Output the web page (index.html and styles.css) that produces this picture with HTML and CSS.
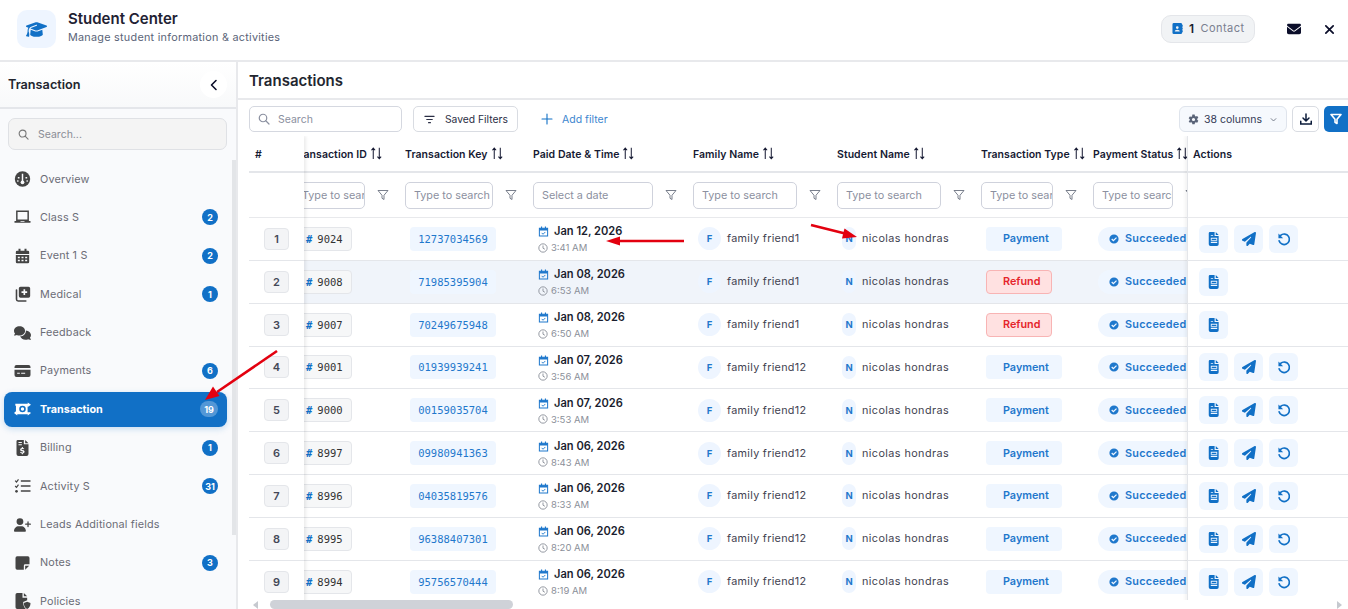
FILE: index.html
```html
<!DOCTYPE html>
<html lang="en">
<head>
<meta charset="utf-8">
<title>Student Center</title>
<link rel="stylesheet" href="styles.css">
</head>
<body>
<svg class="defs" width="0" height="0">
  <symbol id="i-cap" viewBox="0 0 640 512"><path fill="currentColor" d="M320 32c-8.100 0-16.100 1.400-23.700 4.100L15.800 137.400C6.300 140.900 0 149.900 0 160s6.300 19.100 15.800 22.600l57.900 20.900C57.300 229.300 48 259.800 48 291.900v28.100c0 28.400-10.800 57.700-22.300 80.800c-6.500 13-13.900 25.800-22.500 37.600C0 442.700-.9 448.300 .9 453.400s6 8.900 11.200 10.200l64 16c4.200 1.100 8.700 .3 12.400-2s6.300-6.100 7.100-10.400c8.600-42.800 4.300-81.200-2.100-108.700C90.300 344.300 86 329.800 80 316.500V291.900c0-30.200 10.200-58.700 27.900-81.500c12.900-15.500 29.600-28 49.200-35.700l157-61.700c8.200-3.200 17.500 .8 20.700 9s-.8 17.500-9 20.700l-157 61.700c-12.400 4.900-23.300 12.400-32.200 21.600l159.600 57.600c7.600 2.700 15.600 4.100 23.700 4.100s16.100-1.400 23.700-4.100L624.200 182.600c9.500-3.400 15.800-12.500 15.800-22.600s-6.300-19.100-15.800-22.600L343.700 36.100C336.100 33.400 328.100 32 320 32zM128 408c0 35.300 86 72 192 72s192-36.700 192-72L496.700 262.600 354.500 314c-11.100 4-22.800 6-34.500 6s-23.500-2-34.500-6L143.300 262.600 128 408z"/></symbol>
  <symbol id="i-mail" viewBox="0 0 512 512"><path fill="currentColor" d="M48 64C21.500 64 0 85.500 0 112c0 15.100 7.100 29.300 19.200 38.400L236.800 313.600c11.400 8.500 27 8.500 38.400 0L492.800 150.400c12.100-9.100 19.200-23.300 19.200-38.400c0-26.500-21.500-48-48-48H48zM0 176V384c0 35.300 28.700 64 64 64H448c35.300 0 64-28.700 64-64V176L294.400 339.200c-22.800 17.100-54 17.100-76.800 0L0 176z"/></symbol>
  <symbol id="i-x" viewBox="0 0 24 24"><path d="M4 4l16 16M20 4L4 20" fill="none" stroke="currentColor" stroke-width="3.800" stroke-linecap="round"/></symbol>
  <symbol id="i-plane" viewBox="0 0 512 512"><path fill="currentColor" d="M498.100 5.600c10.100 7 15.400 19.100 13.500 31.200l-64 416c-1.500 9.700-7.400 18.200-16 23s-18.900 5.400-28 1.600L284 427.700l-68.500 74.100c-8.900 9.700-22.900 12.900-35.200 8.100S160 493.200 160 480V396.400c0-4 1.500-7.800 4.200-10.700L331.800 202.800c5.800-6.300 5.600-16-.4-22s-15.700-6.400-22-.7L106 360.800 17.700 316.600C7.100 311.300 .3 300.700 0 288.900s5.900-22.800 16.100-28.700l448-256c10.700-6.100 23.900-5.500 34 1.400z"/></symbol>
  <symbol id="i-comments" viewBox="0 0 640 512"><path fill="currentColor" d="M208 352c114.900 0 208-78.800 208-176S322.900 0 208 0S0 78.800 0 176c0 38.600 14.700 74.300 39.600 103.400c-3.500 9.400-8.700 17.700-14.200 24.700c-4.800 6.200-9.700 11-13.300 14.300c-1.800 1.600-3.300 2.900-4.300 3.700c-.5 .4-.9 .7-1.100 .8l-.2 .2C1 327.200-1.400 334.400 .8 340.900S9.100 352 16 352c21.800 0 43.800-5.600 62.100-12.500c9.200-3.500 17.800-7.400 25.300-11.400C134.100 343.300 169.800 352 208 352zM448 176c0 112.300-99.100 196.900-216.500 207C255.800 457.700 336.100 512 432 512c38.200 0 73.900-8.700 104.700-23.900c7.500 4 16 7.900 25.200 11.400c18.300 6.900 40.300 12.500 62.100 12.500c6.900 0 13.100-4.500 15.200-11.100c2.100-6.600-.2-13.800-5.800-17.900l-.2-.2c-.2-.2-.6-.4-1.100-.8c-1-.8-2.500-2-4.300-3.700c-3.600-3.300-8.500-8.100-13.300-14.300c-5.500-7-10.700-15.400-14.200-24.700c24.900-29 39.600-64.700 39.600-103.400c0-92.800-84.900-168.900-192.600-175.500c.4 5.100 .6 10.300 .6 15.500z"/></symbol>
  <symbol id="i-userplus" viewBox="0 0 640 512"><path fill="currentColor" d="M96 128a128 128 0 1 1 256 0A128 128 0 1 1 96 128zM0 482.300C0 383.800 79.800 304 178.300 304h91.400C368.200 304 448 383.800 448 482.300c0 16.400-13.300 29.700-29.700 29.700H29.700C13.300 512 0 498.700 0 482.300zM504 312V248H440c-13.300 0-24-10.700-24-24s10.700-24 24-24h64V136c0-13.300 10.700-24 24-24s24 10.700 24 24v64h64c13.300 0 24 10.700 24 24s-10.700 24-24 24H552v64c0 13.300-10.700 24-24 24s-24-10.700-24-24z"/></symbol>
  <symbol id="i-gauge" viewBox="0 0 24 24"><circle cx="12" cy="12" r="11.500" fill="currentColor"/><path d="M12 4v11M5 10h2.500M16.500 10h2.500M4 15h2M18 15h2" stroke="#f9fafc" stroke-width="2.200" fill="none"/><circle cx="12" cy="17" r="2.800" fill="#f9fafc"/></symbol>
  <symbol id="i-laptop" viewBox="0 0 24 24"><path d="M3.500 3.500h17V17h-17z" fill="none" stroke="currentColor" stroke-width="2.200"/><path d="M0 18h8.500l1 1h5l1-1H24v2.500H0z" fill="currentColor"/></symbol>
  <symbol id="i-cal" viewBox="0 0 24 24"><path fill="currentColor" fill-rule="evenodd" d="M6 1h3v3h6V1h3v3h2a2 2 0 0 1 2 2v3H2V6a2 2 0 0 1 2-2h2zM2 10.500h20V21a2 2 0 0 1-2 2H4a2 2 0 0 1-2-2zM5 13v2.500h3V13zm5.500 0v2.500h3V13zm5.500 0v2.500h3V13zM5 17.500V20h3v-2.500zm5.500 0V20h3v-2.500zm5.500 0V20h3v-2.500z"/></symbol>
  <symbol id="i-med" viewBox="0 0 24 24"><path fill="currentColor" fill-rule="evenodd" d="M9 1h12a2.500 2.500 0 0 1 2.500 2.500V15a2.500 2.500 0 0 1-2.500 2.500H9A2.500 2.500 0 0 1 6.500 15V3.500A2.500 2.500 0 0 1 9 1zm4.500 4v3h-3v2.500h3v3H16v-3h3V8h-3V5z"/><path d="M3 6v14a2.500 2.500 0 0 0 2.500 2.500H17" fill="none" stroke="currentColor" stroke-width="2.400" stroke-linecap="round"/></symbol>
  <symbol id="i-card" viewBox="0 0 24 24"><path fill="currentColor" fill-rule="evenodd" d="M3 3h18a3 3 0 0 1 3 3v1.500H0V6a3 3 0 0 1 3-3zM0 10h24v8a3 3 0 0 1-3 3H3a3 3 0 0 1-3-3zm4 4.500V16h4v-1.500zm6 0V16h6v-1.500z"/></symbol>
  <symbol id="i-money" viewBox="0 0 26 20"><path fill="currentColor" fill-rule="evenodd" d="M2 2h19V0l5 3.500L21 7V5h-.2v10H24v-.5l2 1.500-5 4v-2H5v2l-5-4 3-2.400V5H2zm11 3a5 5 0 1 0 0 10 5 5 0 0 0 0-10z"/><circle cx="13" cy="10" r="2.600" fill="currentColor"/></symbol>
  <symbol id="i-bill" viewBox="0 0 24 24"><path fill="currentColor" fill-rule="evenodd" d="M5 0h9v6.500h7V21a3 3 0 0 1-3 3H6a3 3 0 0 1-3-3V2a2 2 0 0 1 2-2zm11 0l5 5h-5zM6 3v1.500h5V3zm0 3.500V8h5V6.500zM11 10.500V12c-1.500.3-2.500 1.300-2.500 2.600 0 3 4.500 1.800 4.500 3.300 0 1.100-2.500.8-4-.1l-.5 1.500c.8.400 1.600.7 2.500.8V21.500h1.600V20c1.500-.3 2.500-1.200 2.500-2.500 0-3-4.500-2-4.500-3.300 0-1 2-.9 3.500-.2l.5-1.400c-.6-.3-1.300-.5-2-.6v-1.500z"/></symbol>
  <symbol id="i-list" viewBox="0 0 24 24"><path d="M1 4l2 2 3-4M1 12l2 2 3-4" fill="none" stroke="currentColor" stroke-width="1.800"/><path d="M9.500 4.500H24M9.500 12H24M9.500 19.500H24" stroke="currentColor" stroke-width="2.400"/><circle cx="3" cy="20" r="2" fill="currentColor"/></symbol>
  <symbol id="i-note" viewBox="0 0 24 24"><path fill="currentColor" d="M4 2h16a2.500 2.500 0 0 1 2.500 2.500V14H16a2 2 0 0 0-2 2v6H4a2.500 2.500 0 0 1-2.500-2.500v-15A2.500 2.500 0 0 1 4 2zM22 16l-6 6v-6z"/></symbol>
  <symbol id="i-policy" viewBox="0 0 24 24"><path fill="currentColor" d="M4 0h8v7h7v4l-6 2.500c0 4 1 7.500 4 10.500H4a2.500 2.500 0 0 1-2.500-2.500v-19A2.500 2.500 0 0 1 4 0zm10 0l5 5h-5z"/><path fill="currentColor" d="M19 13l5 2c0 4-1.500 7.500-5 9-3.500-1.500-5-5-5-9z"/></symbol>
  <symbol id="i-contact" viewBox="0 0 24 24"><path fill="currentColor" fill-rule="evenodd" d="M4 0h15a3 3 0 0 1 3 3v18a3 3 0 0 1-3 3H4a3 3 0 0 1-3-3V3a3 3 0 0 1 3-3zm7.500 7a3 3 0 1 0 0 6 3 3 0 0 0 0-6zM6 18.500h11c0-2.500-2-4-5.500-4s-5.500 1.500-5.500 4z"/><path fill="currentColor" d="M22.500 4H24v4h-1.500zM22.500 10H24v4h-1.500zM22.500 16H24v4h-1.500z"/></symbol>
  <symbol id="i-gear" viewBox="0 0 24 24"><path fill="currentColor" fill-rule="evenodd" d="M9.500 1h5l.7 3.200 1.800 1 3.100-1 2.400 4.200-2.400 2.200v2l2.400 2.200-2.400 4.200-3.100-1-1.800 1-.7 3.200h-5l-.7-3.200-1.800-1-3.100 1L1.500 15.800l2.400-2.200v-2L1.500 9.400l2.400-4.200 3.100 1 1.800-1zM12 8.500a3.500 3.500 0 1 0 0 7 3.500 3.500 0 0 0 0-7z"/></symbol>
  <symbol id="i-down" viewBox="0 0 24 24"><path d="M5 9l7 7 7-7" fill="none" stroke="currentColor" stroke-width="2.400"/></symbol>
  <symbol id="i-dl" viewBox="0 0 24 24"><path d="M12 2v13M6 10l6 6 6-6" fill="none" stroke="currentColor" stroke-width="3" stroke-linecap="round" stroke-linejoin="round"/><path d="M1.500 16.500V22h21v-5.500" fill="none" stroke="currentColor" stroke-width="3" stroke-linecap="round"/></symbol>
  <symbol id="i-funnel" viewBox="0 0 24 24"><path d="M2 3h20l-8 9.500V21l-4-2.500v-6z" fill="none" stroke="currentColor" stroke-width="1.800" stroke-linejoin="round"/></symbol>
  <symbol id="i-funnelb" viewBox="0 0 24 24"><path d="M2 3h20l-8 9.500V21l-4-2.500v-6z" fill="none" stroke="currentColor" stroke-width="3.200" stroke-linejoin="round"/></symbol>
  <symbol id="i-sort" viewBox="0 0 14 14"><path d="M3.500 13V1.200M1.500 3.500L3.500 1.200 5.500 3.500M10 .8v11.800M8 10.300L10 12.600 12 10.300" fill="none" stroke="currentColor" stroke-width="1.100"/></symbol>
  <symbol id="i-calcheck" viewBox="0 0 24 24"><path d="M3 5h18v17H3z" fill="none" stroke="currentColor" stroke-width="2.200"/><path d="M3 5h18v5H3zM6.500 1h2.500v4H6.500zM15 1h2.500v4H15z" fill="currentColor"/><path d="M8 15l3 3 5-5" fill="none" stroke="currentColor" stroke-width="2"/></symbol>
  <symbol id="i-clock" viewBox="0 0 24 24"><circle cx="12" cy="12" r="10" fill="none" stroke="currentColor" stroke-width="2.200"/><path d="M12 6v6.500l4.500 2.500" fill="none" stroke="currentColor" stroke-width="2.200"/></symbol>
  <symbol id="i-check" viewBox="0 0 24 24"><path fill="currentColor" fill-rule="evenodd" d="M12 1a11 11 0 1 1 0 22 11 11 0 0 1 0-22zm5 6.500l-6.500 6.500L7.500 11 5.500 13l5 5 8.500-8.500z"/></symbol>
  <symbol id="i-file" viewBox="0 0 24 24"><path fill="currentColor" fill-rule="evenodd" d="M5 0h8v7h7v14a3 3 0 0 1-3 3H6a3 3 0 0 1-3-3V2a2 2 0 0 1 2-2zm10 0l5 5h-5zM6.500 10v5h11v-5zm0 6.500V19h11v-2.500zM8 11.500h8v2H8zM6.500 5.500V7h4V5.500z"/></symbol>
  <symbol id="i-undo" viewBox="0 0 24 24"><path d="M6.200 5.800A9 9 0 1 1 3.600 15" fill="none" stroke="currentColor" stroke-width="2.900" stroke-linecap="round"/><path d="M2.500 2.500v8H10.500z" fill="currentColor"/></symbol>
  <symbol id="i-search" viewBox="0 0 24 24"><circle cx="10" cy="10" r="7.500" fill="none" stroke="currentColor" stroke-width="2.400"/><path d="M15.500 15.500L22 22" stroke="currentColor" stroke-width="2.400" stroke-linecap="round"/></symbol>
  <symbol id="i-lines" viewBox="0 0 24 24"><path d="M2 5h20M6 12h12M10 19h4" stroke="currentColor" stroke-width="2.600" stroke-linecap="round"/></symbol>
  <symbol id="i-plus" viewBox="0 0 24 24"><path d="M12 2v20M2 12h20" stroke="currentColor" stroke-width="2.200" stroke-linecap="round"/></symbol>
  <symbol id="i-chev" viewBox="0 0 24 24"><path d="M16 3l-9 9 9 9" fill="none" stroke="currentColor" stroke-width="3.200" stroke-linecap="round" stroke-linejoin="round"/></symbol>
</svg>

<header class="app-header">
  <div class="brand-tile"><svg class="brand-icon"><use href="#i-cap"/></svg></div>
  <div class="brand-text">
    <div class="brand-title">Student Center</div>
    <div class="brand-sub">Manage student information &amp; activities</div>
  </div>
  <div class="contact-pill"><svg class="contact-icon"><use href="#i-contact"/></svg><b>1</b><span>Contact</span></div>
  <svg class="head-mail"><use href="#i-mail"/></svg>
  <svg class="head-x"><use href="#i-x"/></svg>
</header>

<div class="app-body">
  <aside class="sidebar">
    <div class="side-head">
      <span class="side-title">Transaction</span>
      <span class="side-toggle"><svg><use href="#i-chev"/></svg></span>
    </div>
    <div class="side-search"><svg><use href="#i-search"/></svg><span>Search...</span></div>
    <nav class="nav">
      <div class="nav-item"><svg class="nav-icon"><use href="#i-gauge"/></svg><span class="nav-label">Overview</span></div>
      <div class="nav-item"><svg class="nav-icon"><use href="#i-laptop"/></svg><span class="nav-label">Class S</span><span class="nav-badge">2</span></div>
      <div class="nav-item"><svg class="nav-icon"><use href="#i-cal"/></svg><span class="nav-label">Event 1 S</span><span class="nav-badge">2</span></div>
      <div class="nav-item"><svg class="nav-icon"><use href="#i-med"/></svg><span class="nav-label">Medical</span><span class="nav-badge">1</span></div>
      <div class="nav-item"><svg class="nav-icon"><use href="#i-comments"/></svg><span class="nav-label">Feedback</span></div>
      <div class="nav-item"><svg class="nav-icon"><use href="#i-card"/></svg><span class="nav-label">Payments</span><span class="nav-badge">6</span></div>
      <div class="nav-item active"><svg class="nav-icon"><use href="#i-money"/></svg><span class="nav-label">Transaction</span><span class="nav-badge">19</span></div>
      <div class="nav-item"><svg class="nav-icon"><use href="#i-bill"/></svg><span class="nav-label">Billing</span><span class="nav-badge">1</span></div>
      <div class="nav-item"><svg class="nav-icon"><use href="#i-list"/></svg><span class="nav-label">Activity S</span><span class="nav-badge">31</span></div>
      <div class="nav-item"><svg class="nav-icon"><use href="#i-userplus"/></svg><span class="nav-label">Leads Additional fields</span></div>
      <div class="nav-item"><svg class="nav-icon"><use href="#i-note"/></svg><span class="nav-label">Notes</span><span class="nav-badge">3</span></div>
      <div class="nav-item"><svg class="nav-icon"><use href="#i-policy"/></svg><span class="nav-label">Policies</span></div>
    </nav>
    <div class="side-scrollbar"></div>
  </aside>

  <main class="main">
    <h1 class="main-title">Transactions</h1>
    <div class="toolbar">
      <div class="tb-search"><svg><use href="#i-search"/></svg><span>Search</span></div>
      <div class="tb-saved"><svg><use href="#i-lines"/></svg><span>Saved Filters</span></div>
      <div class="tb-add"><svg><use href="#i-plus"/></svg><span>Add filter</span></div>
      <div class="tb-columns"><svg class="tb-gear"><use href="#i-gear"/></svg><span>38 columns</span><svg class="tb-caret"><use href="#i-down"/></svg></div>
      <div class="tb-dl"><svg><use href="#i-dl"/></svg></div>
      <div class="tb-filter"><svg><use href="#i-funnelb"/></svg></div>
    </div>

    <div class="grid">
      <div class="pane pane-index">
        <div class="row-head cell-index-head">#</div>
        <div class="row-filter"></div>
        <div class="row"><span class="idx">1</span></div>
        <div class="row"><span class="idx">2</span></div>
        <div class="row"><span class="idx">3</span></div>
        <div class="row"><span class="idx">4</span></div>
        <div class="row"><span class="idx">5</span></div>
        <div class="row"><span class="idx">6</span></div>
        <div class="row"><span class="idx">7</span></div>
        <div class="row"><span class="idx">8</span></div>
        <div class="row"><span class="idx">9</span></div>
      </div>

      <div class="pane pane-scroll">
        <div class="scroll-inner">
          <div class="row-head">
            <div class="h c-id">Transaction ID <svg class="sort"><use href="#i-sort"/></svg></div>
            <div class="h c-key">Transaction Key <svg class="sort"><use href="#i-sort"/></svg></div>
            <div class="h c-date">Paid Date &amp; Time <svg class="sort"><use href="#i-sort"/></svg></div>
            <div class="h c-fam">Family Name <svg class="sort"><use href="#i-sort"/></svg></div>
            <div class="h c-stu">Student Name <svg class="sort"><use href="#i-sort"/></svg></div>
            <div class="h c-type">Transaction Type <svg class="sort"><use href="#i-sort"/></svg></div>
            <div class="h c-stat">Payment Status <svg class="sort"><use href="#i-sort"/></svg></div>
          </div>
          <div class="row-filter">
            <div class="f c-id"><span class="inp">Type to search</span><svg class="fun"><use href="#i-funnel"/></svg></div>
            <div class="f c-key"><span class="inp">Type to search</span><svg class="fun"><use href="#i-funnel"/></svg></div>
            <div class="f c-date"><span class="inp">Select a date</span><svg class="fun"><use href="#i-funnel"/></svg></div>
            <div class="f c-fam"><span class="inp">Type to search</span><svg class="fun"><use href="#i-funnel"/></svg></div>
            <div class="f c-stu"><span class="inp">Type to search</span><svg class="fun"><use href="#i-funnel"/></svg></div>
            <div class="f c-type"><span class="inp">Type to search</span><svg class="fun"><use href="#i-funnel"/></svg></div>
            <div class="f c-stat"><span class="inp">Type to search</span><svg class="fun"><use href="#i-funnel"/></svg></div>
          </div>

          <div class="row">
            <div class="d c-id"><span class="chip-id"><i>#</i>9024</span></div>
            <div class="d c-key"><span class="chip-key">12737034569</span></div>
            <div class="d c-date"><div class="date"><svg><use href="#i-calcheck"/></svg>Jan 12, 2026</div><div class="time"><svg><use href="#i-clock"/></svg>3:41 AM</div></div>
            <div class="d c-fam"><span class="av">F</span>family friend1</div>
            <div class="d c-stu"><span class="av av-n">N</span>nicolas hondras</div>
            <div class="d c-type"><span class="chip-type">Payment</span></div>
            <div class="d c-stat"><span class="chip-stat"><svg><use href="#i-check"/></svg>Succeeded</span></div>
          </div>
          <div class="row hl">
            <div class="d c-id"><span class="chip-id"><i>#</i>9008</span></div>
            <div class="d c-key"><span class="chip-key">71985395904</span></div>
            <div class="d c-date"><div class="date"><svg><use href="#i-calcheck"/></svg>Jan 08, 2026</div><div class="time"><svg><use href="#i-clock"/></svg>6:53 AM</div></div>
            <div class="d c-fam"><span class="av">F</span>family friend1</div>
            <div class="d c-stu"><span class="av av-n">N</span>nicolas hondras</div>
            <div class="d c-type"><span class="chip-type refund">Refund</span></div>
            <div class="d c-stat"><span class="chip-stat"><svg><use href="#i-check"/></svg>Succeeded</span></div>
          </div>
          <div class="row">
            <div class="d c-id"><span class="chip-id"><i>#</i>9007</span></div>
            <div class="d c-key"><span class="chip-key">70249675948</span></div>
            <div class="d c-date"><div class="date"><svg><use href="#i-calcheck"/></svg>Jan 08, 2026</div><div class="time"><svg><use href="#i-clock"/></svg>6:50 AM</div></div>
            <div class="d c-fam"><span class="av">F</span>family friend1</div>
            <div class="d c-stu"><span class="av av-n">N</span>nicolas hondras</div>
            <div class="d c-type"><span class="chip-type refund">Refund</span></div>
            <div class="d c-stat"><span class="chip-stat"><svg><use href="#i-check"/></svg>Succeeded</span></div>
          </div>
          <div class="row">
            <div class="d c-id"><span class="chip-id"><i>#</i>9001</span></div>
            <div class="d c-key"><span class="chip-key">01939939241</span></div>
            <div class="d c-date"><div class="date"><svg><use href="#i-calcheck"/></svg>Jan 07, 2026</div><div class="time"><svg><use href="#i-clock"/></svg>3:56 AM</div></div>
            <div class="d c-fam"><span class="av">F</span>family friend12</div>
            <div class="d c-stu"><span class="av av-n">N</span>nicolas hondras</div>
            <div class="d c-type"><span class="chip-type">Payment</span></div>
            <div class="d c-stat"><span class="chip-stat"><svg><use href="#i-check"/></svg>Succeeded</span></div>
          </div>
          <div class="row">
            <div class="d c-id"><span class="chip-id"><i>#</i>9000</span></div>
            <div class="d c-key"><span class="chip-key">00159035704</span></div>
            <div class="d c-date"><div class="date"><svg><use href="#i-calcheck"/></svg>Jan 07, 2026</div><div class="time"><svg><use href="#i-clock"/></svg>3:53 AM</div></div>
            <div class="d c-fam"><span class="av">F</span>family friend12</div>
            <div class="d c-stu"><span class="av av-n">N</span>nicolas hondras</div>
            <div class="d c-type"><span class="chip-type">Payment</span></div>
            <div class="d c-stat"><span class="chip-stat"><svg><use href="#i-check"/></svg>Succeeded</span></div>
          </div>
          <div class="row">
            <div class="d c-id"><span class="chip-id"><i>#</i>8997</span></div>
            <div class="d c-key"><span class="chip-key">09980941363</span></div>
            <div class="d c-date"><div class="date"><svg><use href="#i-calcheck"/></svg>Jan 06, 2026</div><div class="time"><svg><use href="#i-clock"/></svg>8:43 AM</div></div>
            <div class="d c-fam"><span class="av">F</span>family friend12</div>
            <div class="d c-stu"><span class="av av-n">N</span>nicolas hondras</div>
            <div class="d c-type"><span class="chip-type">Payment</span></div>
            <div class="d c-stat"><span class="chip-stat"><svg><use href="#i-check"/></svg>Succeeded</span></div>
          </div>
          <div class="row">
            <div class="d c-id"><span class="chip-id"><i>#</i>8996</span></div>
            <div class="d c-key"><span class="chip-key">04035819576</span></div>
            <div class="d c-date"><div class="date"><svg><use href="#i-calcheck"/></svg>Jan 06, 2026</div><div class="time"><svg><use href="#i-clock"/></svg>8:33 AM</div></div>
            <div class="d c-fam"><span class="av">F</span>family friend12</div>
            <div class="d c-stu"><span class="av av-n">N</span>nicolas hondras</div>
            <div class="d c-type"><span class="chip-type">Payment</span></div>
            <div class="d c-stat"><span class="chip-stat"><svg><use href="#i-check"/></svg>Succeeded</span></div>
          </div>
          <div class="row">
            <div class="d c-id"><span class="chip-id"><i>#</i>8995</span></div>
            <div class="d c-key"><span class="chip-key">96388407301</span></div>
            <div class="d c-date"><div class="date"><svg><use href="#i-calcheck"/></svg>Jan 06, 2026</div><div class="time"><svg><use href="#i-clock"/></svg>8:20 AM</div></div>
            <div class="d c-fam"><span class="av">F</span>family friend12</div>
            <div class="d c-stu"><span class="av av-n">N</span>nicolas hondras</div>
            <div class="d c-type"><span class="chip-type">Payment</span></div>
            <div class="d c-stat"><span class="chip-stat"><svg><use href="#i-check"/></svg>Succeeded</span></div>
          </div>
          <div class="row">
            <div class="d c-id"><span class="chip-id"><i>#</i>8994</span></div>
            <div class="d c-key"><span class="chip-key">95756570444</span></div>
            <div class="d c-date"><div class="date"><svg><use href="#i-calcheck"/></svg>Jan 06, 2026</div><div class="time"><svg><use href="#i-clock"/></svg>8:19 AM</div></div>
            <div class="d c-fam"><span class="av">F</span>family friend12</div>
            <div class="d c-stu"><span class="av av-n">N</span>nicolas hondras</div>
            <div class="d c-type"><span class="chip-type">Payment</span></div>
            <div class="d c-stat"><span class="chip-stat"><svg><use href="#i-check"/></svg>Succeeded</span></div>
          </div>
        </div>
      </div>

      <div class="pane pane-actions">
        <div class="row-head actions-head">Actions</div>
        <div class="row-filter"></div>
        <div class="row acts"><span class="act"><svg><use href="#i-file"/></svg></span><span class="act"><svg><use href="#i-plane"/></svg></span><span class="act"><svg><use href="#i-undo"/></svg></span></div>
        <div class="row acts"><span class="act"><svg><use href="#i-file"/></svg></span></div>
        <div class="row acts"><span class="act"><svg><use href="#i-file"/></svg></span></div>
        <div class="row acts"><span class="act"><svg><use href="#i-file"/></svg></span><span class="act"><svg><use href="#i-plane"/></svg></span><span class="act"><svg><use href="#i-undo"/></svg></span></div>
        <div class="row acts"><span class="act"><svg><use href="#i-file"/></svg></span><span class="act"><svg><use href="#i-plane"/></svg></span><span class="act"><svg><use href="#i-undo"/></svg></span></div>
        <div class="row acts"><span class="act"><svg><use href="#i-file"/></svg></span><span class="act"><svg><use href="#i-plane"/></svg></span><span class="act"><svg><use href="#i-undo"/></svg></span></div>
        <div class="row acts"><span class="act"><svg><use href="#i-file"/></svg></span><span class="act"><svg><use href="#i-plane"/></svg></span><span class="act"><svg><use href="#i-undo"/></svg></span></div>
        <div class="row acts"><span class="act"><svg><use href="#i-file"/></svg></span><span class="act"><svg><use href="#i-plane"/></svg></span><span class="act"><svg><use href="#i-undo"/></svg></span></div>
        <div class="row acts"><span class="act"><svg><use href="#i-file"/></svg></span><span class="act"><svg><use href="#i-plane"/></svg></span><span class="act"><svg><use href="#i-undo"/></svg></span></div>
      </div>

      <div class="hscroll"><span class="hs-left"></span><span class="hs-thumb"></span><span class="hs-right"></span></div>
    </div>
  </main>
</div>

<svg class="arrows" viewBox="0 0 1348 609">
  <path d="M684 241H618" stroke="#e3000f" stroke-width="2.600"/>
  <path d="M606 241l14-4.500v9z" fill="#e3000f"/>
  <path d="M811 225l34 8.500" stroke="#e3000f" stroke-width="2.600"/>
  <path d="M857 237l-15 1.500 2.500-10z" fill="#e3000f"/>
  <path d="M277 351L217 392" stroke="#e3000f" stroke-width="2.600"/>
  <path d="M205 400l8-13.500 6.500 9.500z" fill="#e3000f"/>
</svg>
</body>
</html>
```
FILE: styles.css
```css
* { box-sizing: border-box; }
html, body { margin: 0; height: 609px; overflow: hidden; }
body { width: 1348px; position: relative; font-family: Inter, "Noto Sans", "Liberation Sans", sans-serif; font-size: 11px; color: #1a1d2e; background: #fff; }
.defs { position: absolute; }
svg { display: block; flex: none; }

.app-header { height: 62px; display: flex; align-items: center; padding-left: 17px; border-bottom: 2px solid #e8e9ec; padding-bottom: 2px; }
.brand-tile { width: 39px; height: 38px; border-radius: 10px; background: #eef5ff; display: flex; align-items: center; justify-content: center; margin-right: 12px; }
.brand-icon { width: 21px; height: 17px; color: #1170c6; }
.brand-text { flex: 1; padding-bottom: 2px; }
.brand-title { font-size: 15px; font-weight: 600; color: #1f2233; line-height: 20px; margin-top: -1px; }
.brand-sub { font-size: 10.800px; color: #5a6478; line-height: 16px; margin-top: 1px; letter-spacing: .27px; }
.contact-pill { width: 94px; height: 28px; border-radius: 10px; background: #f1f3f5; border: 1px solid #e4e6ea; display: flex; align-items: center; padding: 0 0 2px 10px; color: #7a8090; margin-right: 32px; font-size: 11px; letter-spacing: .45px; }
.contact-icon { width: 11px; height: 11px; color: #1170c6; margin-right: 6px; }
.contact-pill b { color: #1a1d2e; font-weight: 600; margin-right: 6px; font-size: 12px; }
.head-mail { width: 14px; height: 14px; color: #0b0e2a; margin-right: 23px; }
.head-x { width: 11px; height: 11px; color: #0b0e2a; margin-right: 13px; }

.app-body { display: flex; height: 547px; }
.sidebar { width: 238px; flex: none; border-right: 2px solid #e8e9ec; background: #f9fafc; position: relative; overflow: hidden; }
.side-head { height: 47px; display: flex; align-items: center; justify-content: space-between; padding: 0 9px 0 8px; border-bottom: 2px solid #e4e6ea; background: linear-gradient(#fff, #f8f9fa); }
.side-title { font-size: 12.700px; font-weight: 600; color: #23262f; }
.side-toggle { width: 27px; height: 27px; border-radius: 50%; background: #fff; display: flex; align-items: center; justify-content: center; color: #0b0e2a; }
.side-toggle svg { width: 12px; height: 12px; }
.side-search { margin: 9px 9px 0 8px; height: 32px; border: 1px solid #dfe1e5; border-radius: 7px; background: #f4f4f4; display: flex; align-items: center; padding-left: 9px; color: #8a8d96; font-size: 10.500px; }
.side-search svg { width: 11px; height: 11px; margin-right: 9px; color: #777; }
.nav { padding: 11.500px 9px 0 4px; }
.nav-item { height: 35px; margin-bottom: 3.400px; display: flex; align-items: center; padding: 0 9px 0 9.500px; color: #6b6c76; font-size: 10.800px; letter-spacing: .17px; border-radius: 8px; }
.nav-icon { width: 17px; height: 16px; color: #444; margin-right: 9.500px; }
.nav-label { flex: 1; }
.nav-badge { min-width: 16px; height: 16px; padding: 0 3px; border-radius: 8px; background: #1170c6; color: #fff; font-size: 9px; font-weight: 700; letter-spacing: 0; display: flex; align-items: center; justify-content: center; }
.nav-item.active { background: #1170c6; color: #fff; font-weight: 700; letter-spacing: 0; box-shadow: 0 2px 6px rgba(17,112,198,.22); }
.nav-item.active .nav-icon { color: #fff; }
.nav-item.active .nav-badge { background: rgba(255,255,255,.28); min-width: 18px; }
.side-scrollbar { position: absolute; right: 0; top: 98px; width: 4px; height: 375px; background: #e3e5e8; }

.main { flex: 1; min-width: 0; position: relative; }
.main-title { margin: 0; height: 38px; padding: 0 0 0 11px; font-size: 15px; font-weight: 600; color: #23262f; display: flex; align-items: center; border-bottom: 2px solid #e8e9ec; }
.toolbar { display: flex; align-items: center; height: 26px; margin-top: 6px; padding-left: 11px; font-size: 10.500px; }
.tb-search { width: 153px; height: 26px; border: 1px solid #d5d8e0; border-radius: 5px; display: flex; align-items: center; padding-left: 8px; color: #8b90a0; }
.tb-search svg { width: 12px; height: 12px; margin-right: 8px; color: #8b90a0; }
.tb-saved { width: 105px; height: 26px; margin-left: 11px; border: 1px solid #d9dce2; border-radius: 5px; display: flex; align-items: center; padding-left: 9px; color: #2b2f45; font-size: 10.300px; }
.tb-saved svg { width: 13px; height: 11px; margin-right: 9px; color: #2b2f45; }
.tb-add { display: flex; align-items: center; color: #3d86cf; margin-left: 23px; flex: 1; }
.tb-add svg { width: 12px; height: 12px; margin-right: 9px; color: #1170c6; }
.tb-columns { width: 108px; height: 26px; border: 1px solid #dfe4ec; border-radius: 6px; background: #f6f9fd; display: flex; align-items: center; padding-left: 8px; color: #333a55; }
.tb-gear { width: 11px; height: 11px; color: #5a6478; margin-right: 5px; }
.tb-caret { width: 9px; height: 9px; color: #6b7280; margin-left: 7px; }
.tb-dl { width: 27px; height: 26px; margin-left: 5px; border: 1px solid #d9dce2; border-radius: 5px; display: flex; align-items: center; justify-content: center; color: #0b1b3a; }
.tb-dl svg { width: 12px; height: 12px; }
.tb-filter { width: 24px; height: 26px; margin-left: 5px; background: #1170c6; border-radius: 5px 0 0 5px; display: flex; align-items: center; padding-left: 6px; color: #fff; }
.tb-filter svg { width: 12px; height: 12px; }

.grid { position: relative; display: flex; margin: 4px 0 0 11px; height: 473px; overflow: hidden; }
.pane { flex: none; background: #fff; }
.pane-index { width: 55px; position: relative; z-index: 2; box-shadow: 2px 0 3px rgba(0,0,0,.08); }
.pane-scroll { width: 883px; overflow: hidden; }
.scroll-inner { margin-left: -23px; width: 1000px; }
.pane-actions { width: 161px; position: relative; z-index: 2; border-left: 1px solid #e4e6ea; box-shadow: -2px 0 3px rgba(0,0,0,.05); }

.row-head { height: 37px; padding-top: 2px; border-bottom: 2px solid #e4e6ea; display: flex; align-items: center; font-weight: 600; font-size: 10.500px; letter-spacing: .05px; color: #161a33; }
.row-filter { height: 45px; border-bottom: 1px solid #e8e9ec; display: flex; align-items: center; }
.row { height: 42.850px; border-bottom: 1px solid #e4e6ea; display: flex; align-items: center; }
.row.hl { background: #f0f4fa; }
.pane-index .row { justify-content: center; padding-left: 0; }
.cell-index-head { padding-left: 6px; }
.actions-head { padding-left: 5px; }

.c-id, .c-type { width: 112px; }
.c-key { width: 128px; }
.c-date { width: 160px; }
.c-fam, .c-stu { width: 144px; }
.c-stat { width: 120px; }
.h { padding-left: 12px; white-space: nowrap; display: flex; align-items: center; flex: none; }
.sort { width: 13px; height: 13px; margin: -2px 0 0 3px; color: #161a33; }
.f { padding-left: 12px; display: flex; align-items: center; flex: none; }
.inp { display: block; height: 27px; line-height: 25px; border: 1px solid #cfd2dc; border-radius: 5px; padding: 0 7px 0 8px; color: #8b90a0; font-size: 10.800px; overflow: hidden; white-space: nowrap; margin-right: 12px; background: #fff; flex: none; }
.c-id .inp, .c-type .inp { width: 72px; }
.c-key .inp { width: 88px; }
.c-date .inp { width: 120px; }
.c-fam .inp, .c-stu .inp { width: 104px; }
.c-stat .inp { width: 80px; }
.fun { width: 12px; height: 12px; color: #6b7280; }

.d { padding-left: 17px; flex: none; display: flex; align-items: center; font-size: 10.800px; letter-spacing: .3px; color: #3f4250; white-space: nowrap; }
.d.c-stu { letter-spacing: .42px; }
.idx { width: 25px; height: 22px; border: 1px solid #e4e6ea; border-radius: 4px; background: #f3f4f6; display: flex; align-items: center; justify-content: center; font-weight: 600; color: #444857; }
.chip-id { width: 54px; height: 24px; border: 1px solid #e4e6ea; border-radius: 4px; background: #f6f7f8; font-family: "DejaVu Sans Mono", monospace; font-size: 10.500px; letter-spacing: 0; color: #333; display: flex; align-items: center; padding-left: 7px; font-weight: 400; }
.chip-id i { font-style: normal; color: #1170c6; font-weight: 700; margin-right: 5px; }
.chip-key { width: 86px; height: 24px; border-radius: 4px; background: #eff6ff; font-family: "DejaVu Sans Mono", monospace; font-size: 10.500px; letter-spacing: 0; color: #1f78cc; display: flex; align-items: center; justify-content: center; }
.d.c-date { flex-direction: column; align-items: flex-start; justify-content: center; padding-top: 1px; letter-spacing: 0; }
.date { display: flex; align-items: center; font-weight: 600; font-size: 11.100px; color: #1a1d2e; line-height: 15px; }
.date svg { width: 11px; height: 11px; margin-right: 5px; color: #1f78cc; }
.time { display: flex; align-items: center; font-size: 9.500px; color: #8b8f99; line-height: 13px; margin-top: 2px; }
.time svg { width: 10px; height: 10px; margin-right: 3px; }
.av { width: 23px; height: 23px; border-radius: 50%; background: #eef5ff; color: #1f78cc; font-weight: 700; font-size: 9.500px; letter-spacing: 0; display: flex; align-items: center; justify-content: center; margin: 0 6px 0 0; }
.av-n { width: 14px; border-radius: 7px; margin-right: 6px; }
.chip-type { width: 76px; height: 24px; border-radius: 4px; background: #eff6ff; color: #1f78cc; font-weight: 600; letter-spacing: 0; display: flex; align-items: center; padding-left: 17px; }
.chip-type.refund { width: 66px; background: #ffe1e1; border: 1px solid #f8b4b4; color: #e5242a; padding-left: 16px; }
.chip-stat { height: 24px; border-radius: 12px; background: #eff6ff; color: #1f78cc; font-weight: 600; letter-spacing: .3px; display: flex; align-items: center; padding: 0 0 0 11px; width: 110px; }
.chip-stat svg { width: 10px; height: 10px; margin-right: 6px; }
.acts { padding-left: 11px; gap: 6px; }
.act { width: 29px; height: 28px; border-radius: 6px; background: #eff6ff; display: flex; align-items: center; justify-content: center; color: #1170c6; }
.act svg { width: 14px; height: 14px; }

.hscroll { position: absolute; left: 0; right: 0; bottom: 0; height: 9px; background: #fff; z-index: 3; }
.hs-left { position: absolute; left: 4px; top: 1px; border: 4px solid transparent; border-left: 0; border-right: 5px solid #c6c9cf; }
.hs-right { position: absolute; right: 6px; top: 1px; border: 4px solid transparent; border-right: 0; border-left: 5px solid #c6c9cf; }
.hs-thumb { position: absolute; left: 21px; top: 0; width: 243px; height: 9px; border-radius: 5px; background: #cfd2d8; }

.arrows { position: absolute; left: 0; top: 0; width: 1348px; height: 609px; z-index: 10; pointer-events: none; }
```
